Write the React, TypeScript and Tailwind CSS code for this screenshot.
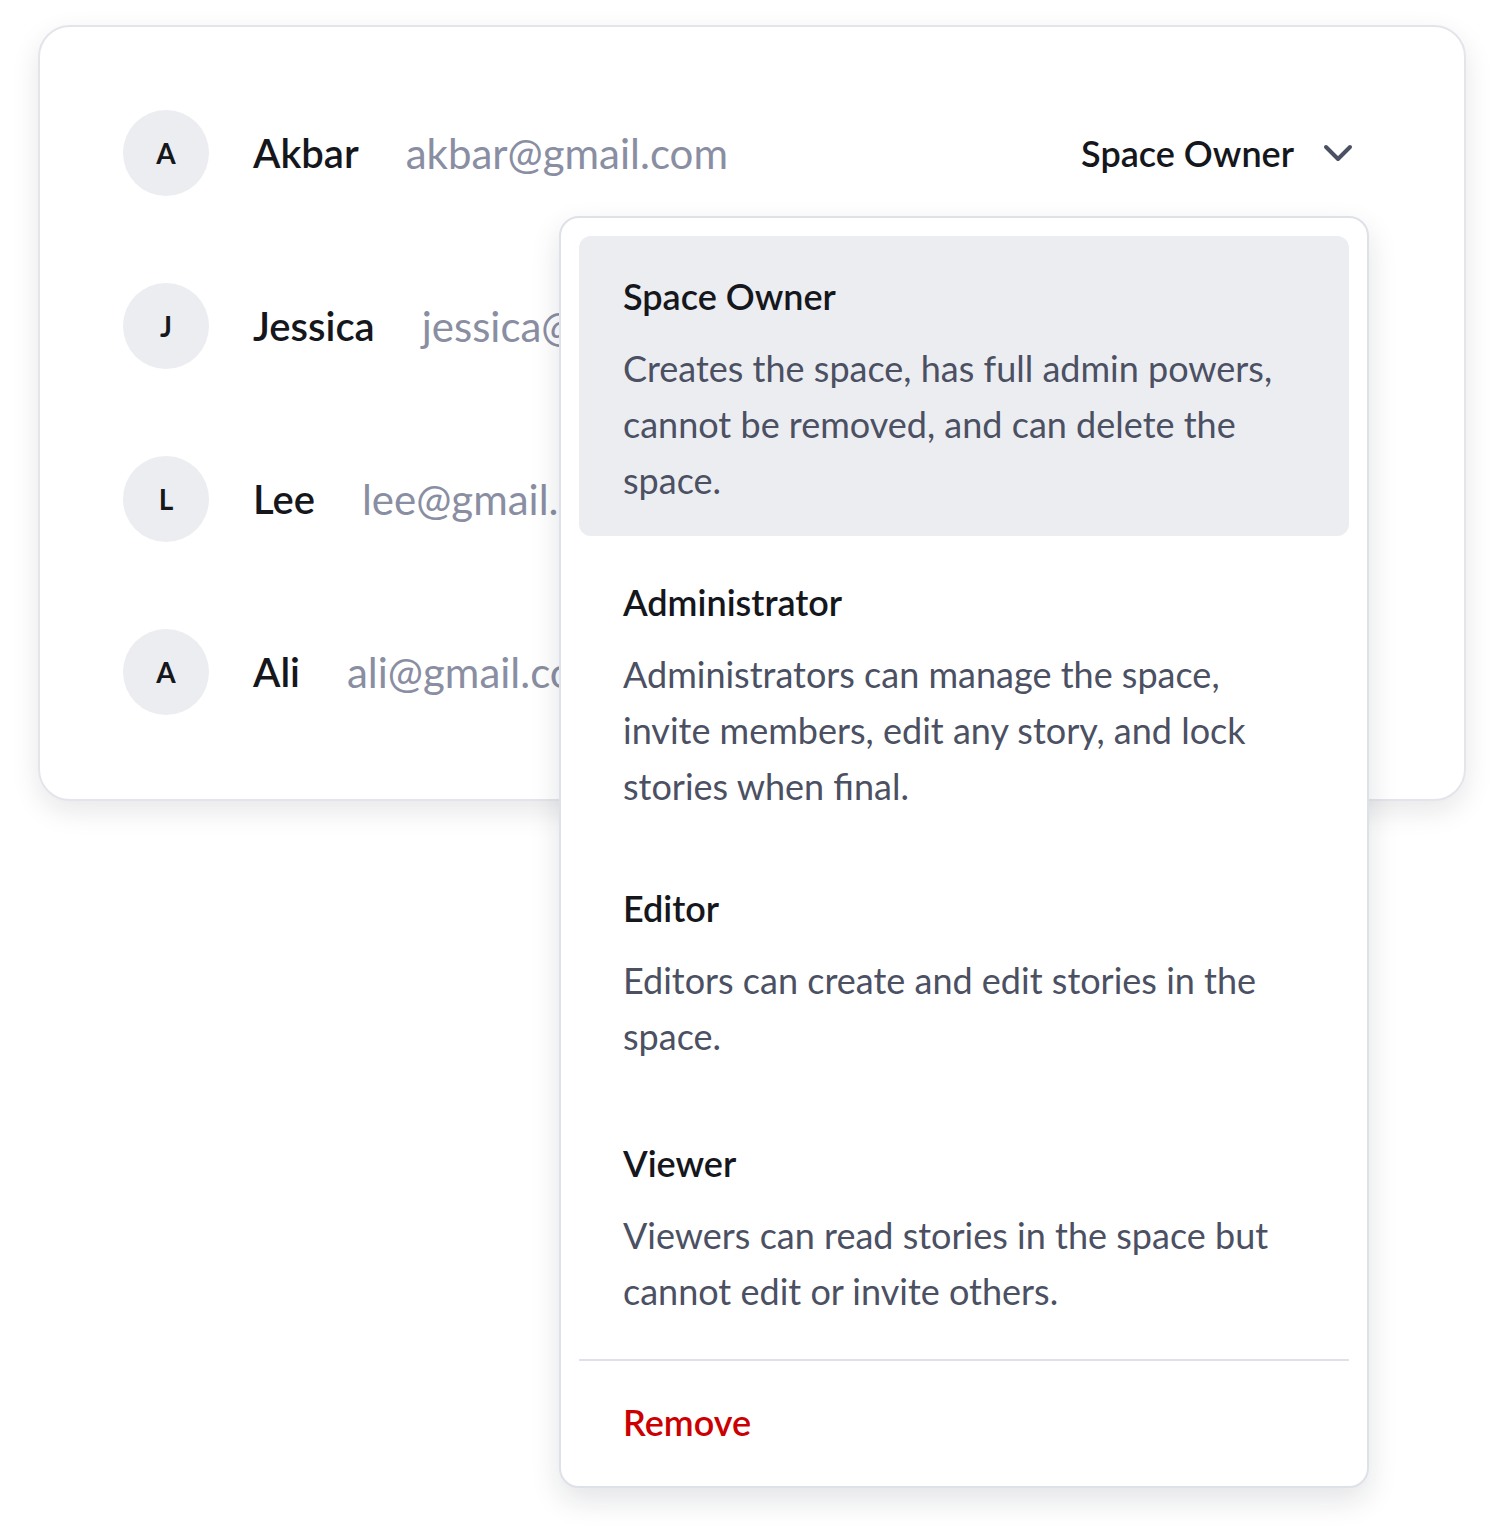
import { ChevronDown } from "lucide-react";

type Member = {
  initial: string;
  name: string;
  email: string;
  role: string;
};

type Role = {
  title: string;
  description: string;
};

const members: Member[] = [
  { initial: "A", name: "Akbar", email: "akbar@gmail.com", role: "Space Owner" },
  { initial: "J", name: "Jessica", email: "jessica@gmail.com", role: "Administrator" },
  { initial: "L", name: "Lee", email: "lee@gmail.com", role: "Editor" },
  { initial: "A", name: "Ali", email: "ali@gmail.com", role: "Viewer" },
];

const roles: Role[] = [
  {
    title: "Space Owner",
    description:
      "Creates the space, has full admin powers, cannot be removed, and can delete the space.",
  },
  {
    title: "Administrator",
    description:
      "Administrators can manage the space, invite members, edit any story, and lock stories when final.",
  },
  {
    title: "Editor",
    description: "Editors can create and edit stories in the space.",
  },
  {
    title: "Viewer",
    description: "Viewers can read stories in the space but cannot edit or invite others.",
  },
];

function MemberRow({ member, open }: { member: Member; open: boolean }) {
  return (
    <div className="flex h-[86px] items-center">
      <div className="flex h-[86px] w-[86px] shrink-0 items-center justify-center rounded-full bg-[#ecedf1] text-[28px] font-bold text-[#15171c]">
        {member.initial}
      </div>
      <span className="ml-[44px] text-[40px] font-semibold text-[#15171c]">{member.name}</span>
      <span className="ml-[47px] text-[42px] text-[#8a8ea2]">{member.email}</span>
      {/* the other rows' role pickers sit under the open menu */}
      {open && (
        <button className="ml-auto mr-[19px] flex items-center gap-[20px] text-[36px] font-semibold text-[#15171c]">
          {member.role}
          <ChevronDown size={48} strokeWidth={2} className="text-[#4b5063]" />
        </button>
      )}
    </div>
  );
}

function RoleMenu() {
  return (
    <div className="absolute left-[519px] top-[189px] w-[810px] rounded-[20px] border-2 border-[#dfe1e8] bg-white p-[18px] shadow-[0_12px_30px_rgba(17,24,39,0.12)]">
      <div className="flex flex-col gap-[6px]">
        {roles.map((role, i) => (
          <div
            key={role.title}
            className={`rounded-[12px] px-[44px] pt-[38px] ${i === 2 ? "pb-[33px]" : "pb-[28px]"} ${i === 0 ? "bg-[#ecedf1]" : ""}`}
          >
            <div className="text-[36px] leading-[44px] font-semibold text-[#15171c]">{role.title}</div>
            <p className="mt-[22px] text-[36px] leading-[56px] text-[#4b5063]">{role.description}</p>
          </div>
        ))}
      </div>
      <div className="mt-[12px] h-[2px] bg-[#dfe1e8]" />
      <button className="block w-full px-[44px] pt-[39px] pb-[24px] text-left text-[36px] leading-[44px] font-semibold text-[#cc0000]">
        Remove
      </button>
    </div>
  );
}

export default function App() {
  return (
    <div className="min-h-[1530px] bg-white px-[38px] pt-[25px] font-['Lato','Noto_Sans',sans-serif] antialiased">
      <div className="relative w-[1428px] rounded-[32px] border-2 border-[#e3e5eb] bg-white px-[83px] pt-[83px] pb-[84px] shadow-[0_10px_28px_rgba(17,24,39,0.10)]">
        <div className="flex flex-col gap-[87px]">
          {members.map((m, i) => (
            <MemberRow key={m.email} member={m} open={i === 0} />
          ))}
        </div>
        <RoleMenu />
      </div>
    </div>
  );
}
